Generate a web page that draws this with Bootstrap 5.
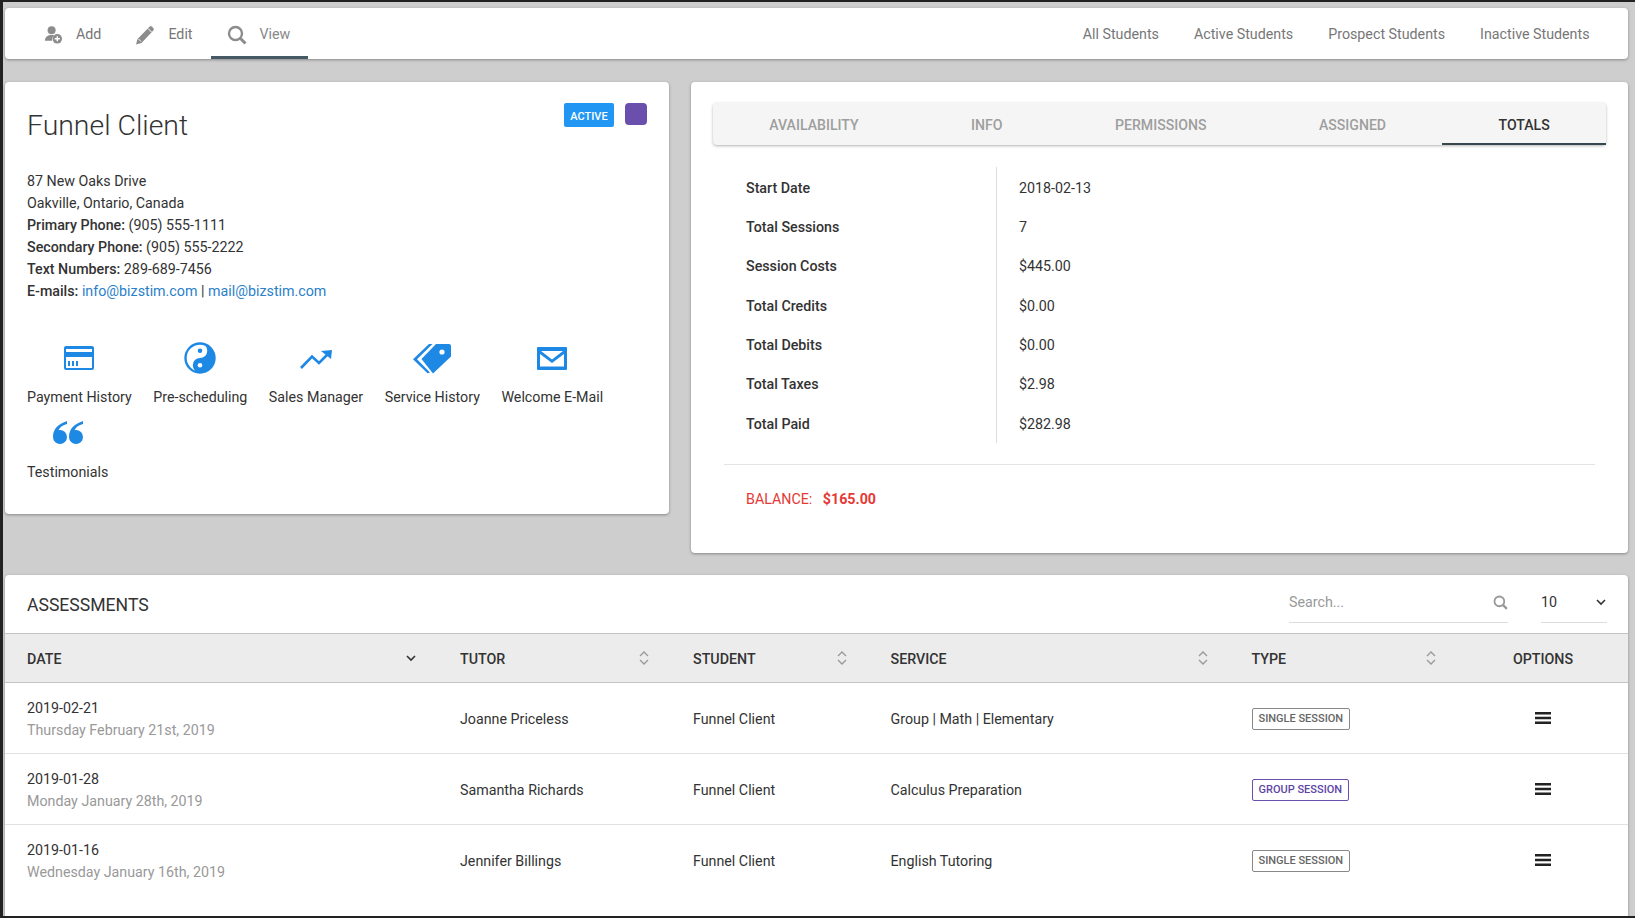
<!DOCTYPE html>
<html lang="en">
<head>
<meta charset="utf-8">
<title>Funnel Client</title>
<link href="https://cdn.jsdelivr.net/npm/bootstrap@5.3.0/dist/css/bootstrap.min.css" rel="stylesheet">
<style>
html,body{height:100%;overflow:hidden}
body{background:#cecece;font-family:Roboto,"Liberation Sans",sans-serif;font-size:14.25px;color:#333}
.frame{height:918px;overflow:hidden;border-top:2px solid #222;border-left:3px solid #222;border-bottom:2px solid #222;padding:6px 7px 0 2px;display:flex;flex-direction:column;gap:23px}
.panel{background:#fff;border-radius:4px;box-shadow:0 1px 3px rgba(0,0,0,.35)}
.topbar{height:51px;flex:none;padding-left:23px;padding-right:21px}
.topitem{display:flex;align-items:center;height:51px;color:#777;gap:13px;padding:2px 16px 0;margin-right:2px;text-decoration:none}
.topitem.on{border-bottom:3px solid #455a64;padding:5px 18px 0 16px;color:#888}
.toplink{color:#777;text-decoration:none;padding:2px 17.5px 0}
.cols{display:flex;gap:22px;align-items:flex-start;flex:none}
.clientcard{width:664px;height:432px;padding:24px 22px 22px;position:relative;flex:none}
.clientname{font-size:28.4px;font-weight:300;color:#333;line-height:40px;margin:0 0 25px}
.infolines{line-height:21.9px;color:#333}
.infolines a{color:#2a7fc9;text-decoration:none}
.statebox{position:absolute;top:21px;right:22px;display:flex;gap:11px}
.statetag{background:#2196f3;color:#fff;font-weight:500;font-size:11px;height:24px;width:50px;display:flex;align-items:center;justify-content:center;border-radius:2px;padding-top:4px}
.swatch{width:22px;height:22px;background:#6a4fad;border-radius:4px}
.shortcuts{display:flex;flex-wrap:wrap;column-gap:21.5px;margin-top:40px}
.shortcut{display:flex;flex-direction:column;align-items:center;height:75px;color:#333}
.shortcut svg{height:32px;margin-bottom:12px;display:block}
.shortcut span{line-height:22px}
.detailcard{flex:1;height:471px;padding:21px 22px}
.tabbar{background:#f5f5f5;border-radius:4px;box-shadow:0 1px 3px rgba(0,0,0,.3);height:42px;display:flex}
.tabitem{flex:1 1 auto;text-align:center;line-height:44px;color:#9e9e9e;font-weight:500;font-size:14.1px;padding:0 54px;text-decoration:none}
.tabitem.on{color:#333;border-bottom:2px solid #37474f}
.statsrows{margin:22px 11px 0 11px;border-bottom:1px solid #e4e4e4;padding-bottom:21px}
.statline{display:flex;height:39.4px;align-items:center}
.statname{width:273px;padding:3px 0 0 22px;font-weight:500;border-right:1px solid #ddd;height:100%;display:flex;align-items:center;color:#333}
.statval{padding:3px 0 0 22px}
.owing{color:#e53935;margin:24px 0 0 33px;font-weight:400}
.owing b{font-weight:700;margin-left:7px}
.tablecard{flex:1;display:flex;flex-direction:column;border-radius:4px 4px 0 0;margin-top:-1px}
.tabletop{height:58px;padding:0 21px 0 22px;display:flex;align-items:center;justify-content:space-between;flex:none}
.tabletitle{font-size:17.6px;color:#333;margin:0;padding-top:4px;text-transform:uppercase}
.searchwrap{width:219px;height:41px;padding-top:2px;border-bottom:1px solid #ddd;display:flex;align-items:center;justify-content:space-between;color:#999;margin-right:33px}
.pagewrap{width:66px;height:41px;padding:2px 1px 0 0;border-bottom:1px solid #ddd;display:flex;align-items:center;justify-content:space-between;color:#333}
.filters{display:flex;margin-top:-4px}
.datatable{width:100%;table-layout:fixed;border-collapse:collapse;margin:0}
.datatable th{background:#ececec;height:49px;border-top:1px solid #c4c4c4;border-bottom:1px solid #c4c4c4;font-weight:500;color:#333;padding:3px 22px 0;white-space:nowrap}
.thflex{display:flex;align-items:center;justify-content:space-between}
.thflex svg{margin-top:-3px}
.datatable td{height:71px;padding:0 22px;border-bottom:1px solid #e2e2e2;line-height:22px;color:#333}
.datatable td:nth-child(-n+4){padding-top:2px}
.datatable tr:last-child td{border-bottom:0}
.subdate{color:#999}
.sesstag{display:inline-flex;align-items:center;height:22px;padding:0 6px;font-size:11px;font-weight:500;border:1px solid #888;color:#666;border-radius:2px;white-space:nowrap}
.sesstag.grp{border-color:#6a4fad;color:#5e45a5}
.ham{display:block;margin:0 auto}
</style>
</head>
<body>
<div class="frame">
  <nav class="panel topbar d-flex align-items-center justify-content-between">
    <div class="d-flex align-items-center">
      <a class="topitem" href="#">
        <svg width="19" height="20" viewBox="0 0 20 20"><circle cx="8" cy="5" r="4.2" fill="#8c8c8c"/><path d="M1 16c0-4 3-6 7-6 1 0 2 .1 2.800.4A5.500 5.500 0 0 0 8.600 16z" fill="#8c8c8c"/><circle cx="14" cy="14" r="5" fill="#8c8c8c"/><path d="M14 11.300v5.400M11.300 14h5.400" stroke="#fff" stroke-width="1.500"/></svg>
        <span>Add</span></a>
      <a class="topitem" href="#">
        <svg width="20" height="20" viewBox="0 0 20 20"><path d="M1 19.500l1.500-5.500L14.500 1.700a1.800 1.800 0 0 1 2.500 0l1.300 1.300a1.800 1.800 0 0 1 0 2.500L6.500 18z" fill="#8c8c8c"/><path d="M13 3.500l3.500 3.500M3.500 14l2.500 2.500" stroke="#fff" stroke-width="1"/></svg>
        <span>Edit</span></a>
      <a class="topitem on" href="#">
        <svg width="20" height="20" viewBox="0 0 20 20" fill="none" stroke="#8c8c8c"><circle cx="8.500" cy="8.500" r="6.500" stroke-width="2.400"/><path d="M13.500 13.500l5 5" stroke-width="3"/></svg>
        <span>View</span></a>
    </div>
    <div class="d-flex">
      <a class="toplink" href="#">All Students</a>
      <a class="toplink" href="#">Active Students</a>
      <a class="toplink" href="#">Prospect Students</a>
      <a class="toplink" href="#">Inactive Students</a>
    </div>
  </nav>

  <div class="cols">
    <section class="panel clientcard">
      <div class="statebox"><span class="statetag">ACTIVE</span><span class="swatch"></span></div>
      <h1 class="clientname">Funnel Client</h1>
      <div class="infolines">
        <div>87 New Oaks Drive</div>
        <div>Oakville, Ontario, Canada</div>
        <div><strong class="fw-medium">Primary Phone:</strong> (905) 555-1111</div>
        <div><strong class="fw-medium">Secondary Phone:</strong> (905) 555-2222</div>
        <div><strong class="fw-medium">Text Numbers:</strong> 289-689-7456</div>
        <div><strong class="fw-medium">E-mails:</strong> <a href="#">info@bizstim.com</a> | <a href="#">mail@bizstim.com</a></div>
      </div>
      <div class="shortcuts">
        <div class="shortcut">
          <svg width="32" height="32" viewBox="0 0 32 32" fill="#1e88e5"><path fill-rule="evenodd" d="M3 4h26a2 2 0 0 1 2 2v20a2 2 0 0 1-2 2H3a2 2 0 0 1-2-2V6a2 2 0 0 1 2-2zm0 3v3h26V7zm0 8v11h26V15z"/><path d="M5 19h2v5H5zM9 19h2v5H9zM13 19h2v5h-2z"/></svg>
          <span>Payment History</span></div>
        <div class="shortcut">
          <svg width="32" height="32" viewBox="0 0 32 32"><circle cx="16" cy="16" r="14.500" fill="#fff" stroke="#1e88e5" stroke-width="2.400"/><path d="M16 1.500A14.500 14.500 0 0 1 16 30.500 7.250 7.250 0 0 1 16 16 7.250 7.250 0 0 0 16 1.500z" fill="#1e88e5"/><circle cx="16" cy="8.750" r="2.300" fill="#1e88e5"/><circle cx="16" cy="23.250" r="2.300" fill="#fff"/></svg>
          <span>Pre-scheduling</span></div>
        <div class="shortcut">
          <svg width="32" height="32" viewBox="0 0 32 32" fill="none" stroke="#1e88e5" stroke-width="2.600"><path d="M1 26 12 14.500 19 21 29 11"/><path d="M21 9 32 8 31 17z" stroke="none" fill="#1e88e5"/></svg>
          <span>Sales Manager</span></div>
        <div class="shortcut">
          <svg width="40" height="32" viewBox="0 0 40 32" fill="#1e88e5"><path d="M24 2h13a2 2 0 0 1 2 2v10.500L21 31.500 9.500 17z"/><path d="M17 2h3.500L5 17.300 18 30.500l-2.500.8L1 17.300z"/><circle cx="30" cy="10" r="2.600" fill="#fff"/></svg>
          <span>Service History</span></div>
        <div class="shortcut">
          <svg width="32" height="32" viewBox="0 0 32 32" fill="#1e88e5"><path fill-rule="evenodd" d="M2 5h28a1 1 0 0 1 1 1v21a1 1 0 0 1-1 1H2a1 1 0 0 1-1-1V6a1 1 0 0 1 1-1zm3 4l11 8.500L27 9zm-1 3v12.500h24V12L16 21z"/></svg>
          <span>Welcome E-Mail</span></div>
        <div class="shortcut">
          <svg width="32" height="32" viewBox="0 0 32 32" fill="#1e88e5"><path d="M15 4C7 7 1 11 1 20a7 7 0 1 0 7-7c-.6 0-1 0-1.500.2C8 10 11 8 15 7zM31 4c-8 3-14 7-14 16a7 7 0 1 0 7-7c-.6 0-1 0-1.500.2 1.500-3.200 4.500-5.200 8.500-6.200z"/></svg>
          <span>Testimonials</span></div>
      </div>
    </section>

    <section class="panel detailcard">
      <div class="tabbar">
        <a class="tabitem" href="#">AVAILABILITY</a>
        <a class="tabitem" href="#">INFO</a>
        <a class="tabitem" href="#">PERMISSIONS</a>
        <a class="tabitem" href="#">ASSIGNED</a>
        <a class="tabitem on" href="#">TOTALS</a>
      </div>
      <div class="statsrows">
        <div class="statline"><div class="statname">Start Date</div><div class="statval">2018-02-13</div></div>
        <div class="statline"><div class="statname">Total Sessions</div><div class="statval">7</div></div>
        <div class="statline"><div class="statname">Session Costs</div><div class="statval">$445.00</div></div>
        <div class="statline"><div class="statname">Total Credits</div><div class="statval">$0.00</div></div>
        <div class="statline"><div class="statname">Total Debits</div><div class="statval">$0.00</div></div>
        <div class="statline"><div class="statname">Total Taxes</div><div class="statval">$2.98</div></div>
        <div class="statline"><div class="statname">Total Paid</div><div class="statval">$282.98</div></div>
      </div>
      <div class="owing">BALANCE: <b>$165.00</b></div>
    </section>
  </div>

  <section class="panel tablecard">
    <div class="tabletop">
      <h2 class="tabletitle fw-normal">Assessments</h2>
      <div class="filters">
        <div class="searchwrap"><span>Search...</span>
          <svg width="15" height="15" viewBox="0 0 20 20" fill="none" stroke="#999"><circle cx="8.500" cy="8.500" r="6.500" stroke-width="2.400"/><path d="M13.500 13.500l5 5" stroke-width="3"/></svg></div>
        <div class="pagewrap"><span>10</span>
          <svg width="10" height="7" viewBox="0 0 10 7" fill="none" stroke="#333" stroke-width="1.600"><path d="M1 1l4 4 4-4"/></svg></div>
      </div>
    </div>
    <table class="datatable">
      <colgroup><col style="width:433px"><col style="width:233px"><col style="width:197.5px"><col style="width:361px"><col style="width:228.5px"><col></colgroup>
      <thead><tr>
        <th><div class="thflex">DATE<svg width="10" height="7" viewBox="0 0 10 7" fill="none" stroke="#333" stroke-width="1.600"><path d="M1 1l4 4 4-4"/></svg></div></th>
        <th><div class="thflex">TUTOR<svg width="10" height="14" viewBox="0 0 10 14" fill="none" stroke="#999" stroke-width="1.300"><path d="M1 5l4-4 4 4M1 9l4 4 4-4"/></svg></div></th>
        <th><div class="thflex">STUDENT<svg width="10" height="14" viewBox="0 0 10 14" fill="none" stroke="#999" stroke-width="1.300"><path d="M1 5l4-4 4 4M1 9l4 4 4-4"/></svg></div></th>
        <th><div class="thflex">SERVICE<svg width="10" height="14" viewBox="0 0 10 14" fill="none" stroke="#999" stroke-width="1.300"><path d="M1 5l4-4 4 4M1 9l4 4 4-4"/></svg></div></th>
        <th><div class="thflex">TYPE<svg width="10" height="14" viewBox="0 0 10 14" fill="none" stroke="#999" stroke-width="1.300"><path d="M1 5l4-4 4 4M1 9l4 4 4-4"/></svg></div></th>
        <th class="text-center">OPTIONS</th>
      </tr></thead>
      <tbody>
        <tr><td><div>2019-02-21</div><div class="subdate">Thursday February 21st, 2019</div></td><td>Joanne Priceless</td><td>Funnel Client</td><td>Group | Math | Elementary</td><td><span class="sesstag">SINGLE SESSION</span></td>
          <td><svg class="ham" width="16" height="12" viewBox="0 0 16 12" fill="#222"><path d="M0 0h16v2.500H0zM0 4.750h16v2.500H0zM0 9.500h16v2.500H0z"/></svg></td></tr>
        <tr><td><div>2019-01-28</div><div class="subdate">Monday January 28th, 2019</div></td><td>Samantha Richards</td><td>Funnel Client</td><td>Calculus Preparation</td><td><span class="sesstag grp">GROUP SESSION</span></td>
          <td><svg class="ham" width="16" height="12" viewBox="0 0 16 12" fill="#222"><path d="M0 0h16v2.500H0zM0 4.750h16v2.500H0zM0 9.500h16v2.500H0z"/></svg></td></tr>
        <tr><td><div>2019-01-16</div><div class="subdate">Wednesday January 16th, 2019</div></td><td>Jennifer Billings</td><td>Funnel Client</td><td>English Tutoring</td><td><span class="sesstag">SINGLE SESSION</span></td>
          <td><svg class="ham" width="16" height="12" viewBox="0 0 16 12" fill="#222"><path d="M0 0h16v2.500H0zM0 4.750h16v2.500H0zM0 9.500h16v2.500H0z"/></svg></td></tr>
      </tbody>
    </table>
  </section>
</div>
<script src="https://cdn.jsdelivr.net/npm/bootstrap@5.3.0/dist/js/bootstrap.bundle.min.js"></script>
</body>
</html>
